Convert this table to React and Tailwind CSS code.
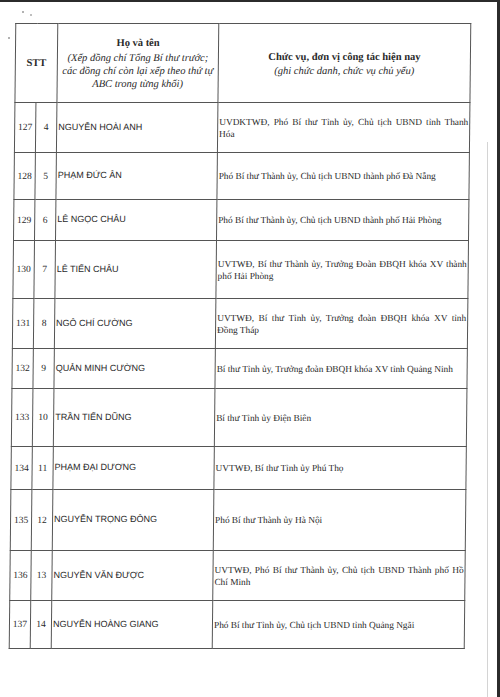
const rows = [
  { stt: 127, no: 4, name: "NGUYỄN HOÀI ANH", role: ["UVDKTWĐ, Phó Bí thư Tỉnh ủy, Chủ tịch UBND tỉnh Thanh", "Hóa"], h: "h-[50px]" },
  { stt: 128, no: 5, name: "PHẠM ĐỨC ÂN", role: "Phó Bí thư Thành ủy, Chủ tịch UBND thành phố Đà Nẵng", h: "h-[47px]" },
  { stt: 129, no: 6, name: "LÊ NGỌC CHÂU", role: "Phó Bí thư Thành ủy, Chủ tịch UBND thành phố Hải Phòng", h: "h-[41px]" },
  { stt: 130, no: 7, name: "LÊ TIẾN CHÂU", role: ["UVTWĐ, Bí thư Thành ủy, Trưởng Đoàn ĐBQH khóa XV thành", "phố Hải Phòng"], h: "h-[58px]" },
  { stt: 131, no: 8, name: "NGÔ CHÍ CƯỜNG", role: ["UVTWĐ, Bí thư Tỉnh ủy, Trưởng đoàn ĐBQH khóa XV tỉnh", "Đồng Tháp"], h: "h-[50px]" },
  { stt: 132, no: 9, name: "QUẢN MINH CƯỜNG", role: "Bí thư Tỉnh ủy, Trưởng đoàn ĐBQH khóa XV tỉnh Quảng Ninh", h: "h-[40px]" },
  { stt: 133, no: 10, name: "TRẦN TIẾN DŨNG", role: "Bí thư Tỉnh ủy Điện Biên", h: "h-[58px]" },
  { stt: 134, no: 11, name: "PHẠM ĐẠI DƯƠNG", role: "UVTWĐ, Bí thư Tỉnh ủy Phú Thọ", h: "h-[43px]" },
  { stt: 135, no: 12, name: "NGUYỄN TRỌNG ĐÔNG", role: "Phó Bí thư Thành ủy Hà Nội", h: "h-[61px]" },
  { stt: 136, no: 13, name: "NGUYỄN VĂN ĐƯỢC", role: ["UVTWĐ, Phó Bí thư Thành ủy, Chủ tịch UBND Thành phố Hồ", "Chí Minh"], h: "h-[50px]" },
  { stt: 137, no: 14, name: "NGUYỄN HOÀNG GIANG", role: "Phó Bí thư Tỉnh ủy, Chủ tịch UBND tỉnh Quảng Ngãi", h: "h-[48px]" },
];

const cell = "border border-[#555] p-0 align-middle";

const RoleText = ({ role }) => {
  if (typeof role === "string") {
    return <span className="block whitespace-nowrap">{role}</span>;
  }

  return (
    <>
      <span className="block whitespace-nowrap text-justify [text-align-last:justify]">{role[0]}</span>
      <span className="block whitespace-nowrap">{role[1]}</span>
    </>
  );
};

export default function App() {
  return (
    <div className="relative h-[697px] w-[500px] overflow-hidden border-t-2 border-r-[3px] border-[#2b2b2b] bg-white font-['Liberation_Serif',serif] text-[#2a2a2a]">
      <span className="absolute left-[22px] top-[9px] h-[2px] w-[2px] rounded-full bg-[#999]" />
      <span className="absolute left-[30px] top-[12px] h-[2px] w-[2px] rounded-full bg-[#aaa]" />
      <span className="absolute left-[8px] top-[35px] h-[2px] w-[2px] rounded-full bg-[#999]" />
      <span className="absolute left-[487px] top-[140px] h-[560px] w-px bg-[#d4d4d4]" />

      <div className="ml-[12px] mt-[21px] w-[455px] -skew-x-[0.6deg]">
        <table className="w-[455px] table-fixed border-collapse">
          <colgroup>
            <col className="w-[21px]" />
            <col className="w-[21px]" />
            <col className="w-[161px]" />
            <col className="w-[252px]" />
          </colgroup>
          <thead>
            <tr className="h-[79px]">
              <th colSpan={2} className={`${cell} text-center text-[10.5px] font-bold`}>
                STT
              </th>
              <th className={`${cell} text-center`}>
                <div className="text-[10.5px] font-bold leading-[13px]">Họ và tên</div>
                <div className="mt-[2px] text-[10.5px] font-normal italic leading-[13px]">
                  (Xếp đồng chí Tổng Bí thư trước;
                  <br />
                  các đồng chí còn lại xếp theo thứ tự
                  <br />
                  ABC trong từng khối)
                </div>
              </th>
              <th className={`${cell} text-center`}>
                <div className="text-[10.5px] font-bold leading-[13px]">Chức vụ, đơn vị công tác hiện nay</div>
                <div className="mt-[1px] text-[10.5px] font-normal italic leading-[13px]">
                  (ghi chức danh, chức vụ chủ yếu)
                </div>
              </th>
            </tr>
          </thead>
          <tbody>
            {rows.map((row) => (
              <tr key={row.stt} className={row.h}>
                <td className={`${cell} text-center text-[9.5px]`}>{row.stt}</td>
                <td className={`${cell} text-center text-[9.5px]`}>{row.no}</td>
                <td className={`${cell} pl-[1px] font-['Liberation_Sans',sans-serif] text-[9px] whitespace-nowrap`}>
                  {row.name}
                </td>
                <td className={`${cell} px-[1px] text-[9.3px] leading-[12px]`}>
                  <RoleText role={row.role} />
                </td>
              </tr>
            ))}
          </tbody>
        </table>
      </div>
    </div>
  );
}
